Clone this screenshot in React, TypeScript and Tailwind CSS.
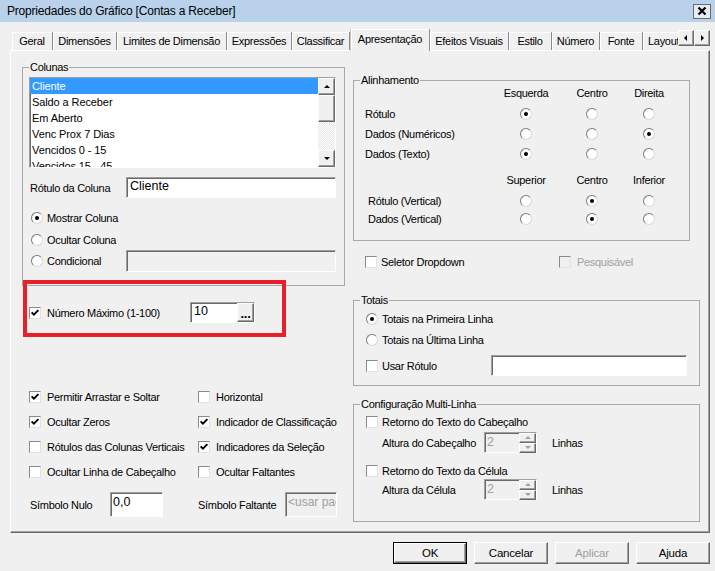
import type { ReactNode } from "react";

/*
 * Caixa de diálogo "Propriedades do Gráfico", aba Apresentação.
 * Controles no estilo clássico do Windows: bordas 3D, campos rebaixados.
 */

const rebaixado =
  "border border-t-[#a0a0a0] border-l-[#a0a0a0] border-r-white border-b-white shadow-[inset_1px_1px_0_#696969]";
const elevado =
  "border border-t-white border-l-white border-r-[#696969] border-b-[#696969] shadow-[inset_-1px_-1px_0_#a0a0a0]";
const fonteCampo = "text-[12.5px] tracking-[0px]";

function Caixa({ marcado = false, desabilitado = false }: { marcado?: boolean; desabilitado?: boolean }) {
  return (
    <span
      className={`relative inline-block size-[12px] shrink-0 border border-t-[#8a8a8a] border-l-[#8a8a8a] border-r-[#e2e2e2] border-b-[#e2e2e2] ${
        desabilitado ? "bg-[#f0f0f0]" : "bg-white"
      }`}
    >
      {marcado ? (
        <svg viewBox="0 0 10 10" className="absolute inset-0 size-full">
          <path d="M1.6 4.4 3.9 6.7 8.4 2.2" fill="none" stroke="#000" strokeWidth="1.9" />
        </svg>
      ) : null}
    </span>
  );
}

function Opcao({ marcado = false }: { marcado?: boolean }) {
  return (
    <span className="inline-flex size-[12px] shrink-0 items-center justify-center rounded-full border border-t-[#7a7a7a] border-l-[#7a7a7a] border-r-[#d8d8d8] border-b-[#d8d8d8] bg-white">
      {marcado ? <span className="size-[4px] rounded-full bg-black" /> : null}
    </span>
  );
}

function Grupo({
  titulo,
  className = "",
  children,
}: {
  titulo: string;
  className?: string;
  children: ReactNode;
}) {
  return (
    <fieldset className={`flex flex-col border border-[#a8a8a8] ${className}`}>
      <legend className="ml-[6px] px-[1px] leading-[13px]">{titulo}</legend>
      {children}
    </fieldset>
  );
}

function Seta({ direcao, cor = "#000" }: { direcao: "cima" | "baixo" | "esq" | "dir"; cor?: string }) {
  const d = {
    cima: "M1 5 4 2 7 5Z",
    baixo: "M1 2 4 5 7 2Z",
    esq: "M5 1 2 4 5 7Z",
    dir: "M3 1 6 4 3 7Z",
  }[direcao];
  return (
    <svg viewBox="0 0 8 8" className="size-[8px]">
      <path d={d} fill={cor} />
    </svg>
  );
}

function Rotador() {
  return (
    <div className={`flex h-[21px] w-[53px] bg-[#f0f0f0] ${rebaixado}`}>
      <span className={`flex-1 pl-[2px] leading-[18px] text-[#a0a0a0] ${fonteCampo}`}>2</span>
      <div className="flex w-[17px] flex-col">
        <span className={`flex flex-1 items-center justify-center bg-[#f0f0f0] ${elevado}`}>
          <Seta direcao="cima" cor="#a0a0a0" />
        </span>
        <span className={`flex flex-1 items-center justify-center bg-[#f0f0f0] ${elevado}`}>
          <Seta direcao="baixo" cor="#a0a0a0" />
        </span>
      </div>
    </div>
  );
}

const abas = [
  { nome: "Geral", w: "w-[41px]" },
  { nome: "Dimensões", w: "w-[64px]" },
  { nome: "Limites de Dimensão", w: "w-[110px]" },
  { nome: "Expressões", w: "w-[65px]" },
  { nome: "Classificar", w: "w-[58px]" },
  { nome: "Apresentação", w: "w-[80px]", ativa: true },
  { nome: "Efeitos Visuais", w: "w-[79px]" },
  { nome: "Estilo", w: "w-[43px]" },
  { nome: "Número", w: "w-[48px]" },
  { nome: "Fonte", w: "w-[43px]" },
  { nome: "Layout", w: "w-[60px] justify-start pl-[5px]" },
];

const colunas = [
  "Cliente",
  "Saldo a Receber",
  "Em Aberto",
  "Venc Prox 7 Dias",
  "Vencidos 0 - 15",
  "Vencidos 15 - 45",
];

const alinhamentoH = [
  { rotulo: "Rótulo", sel: 0 },
  { rotulo: "Dados (Numéricos)", sel: 2 },
  { rotulo: "Dados (Texto)", sel: 0 },
];

const alinhamentoV = [
  { rotulo: "Rótulo (Vertical)", sel: 1 },
  { rotulo: "Dados (Vertical)", sel: 1 },
];

const opcoesGerais: [string, boolean][] = [
  ["Permitir Arrastar e Soltar", true],
  ["Horizontal", false],
  ["Ocultar Zeros", true],
  ["Indicador de Classificação", true],
  ["Rótulos das Colunas Verticais", false],
  ["Indicadores da Seleção", true],
  ["Ocultar Linha de Cabeçalho", false],
  ["Ocultar Faltantes", false],
];

function Celulas({ sel }: { sel: number }) {
  return (
    <>
      <span className="flex w-[64px] justify-center">
        <Opcao marcado={sel === 0} />
      </span>
      <span className="flex w-[68px] justify-center">
        <Opcao marcado={sel === 1} />
      </span>
      <span className="flex w-[46px] justify-center">
        <Opcao marcado={sel === 2} />
      </span>
    </>
  );
}

function Botao({ children, padrao = false, desabilitado = false }: { children: ReactNode; padrao?: boolean; desabilitado?: boolean }) {
  return (
    <div className={`h-[22px] w-[74px] ${padrao ? "border border-black" : ""}`}>
      <div
        className={`flex size-full items-center justify-center bg-[#f0f0f0] text-[11.5px] tracking-[-0.2px] ${elevado} ${
          desabilitado ? "text-[#a0a0a0]" : ""
        }`}
      >
        {children}
      </div>
    </div>
  );
}

export default function App() {
  return (
    <div className="relative h-[571px] w-[715px] overflow-hidden bg-[#f0f0f0] font-['Liberation_Sans',Arial,sans-serif] text-[11px] leading-[14px] tracking-[-0.3px] whitespace-nowrap text-black">
      {/* barra de título */}
      <div className="flex h-[22px] items-center bg-[#b9d1ea] pl-[7px]">
        <span className="text-[12px] tracking-[-0.2px]">Propriedades do Gráfico [Contas a Receber]</span>
        <span className="mr-[4px] ml-auto flex h-[15px] w-[18px] items-center justify-center border border-[#6a6a6a] bg-[#e4ebf3]">
          <svg viewBox="0 0 12 10" className="h-[10px] w-[12px]">
            <path d="M2.5 1.5 9.5 8.5M9.5 1.5 2.5 8.5" stroke="#000" strokeWidth="2.2" />
          </svg>
        </span>
      </div>

      {/* abas */}
      <div className="relative z-10 flex h-[29px] items-end pl-[12px]">
        <div className="flex h-full w-[666px] items-end overflow-hidden">
          {abas.map((a) => (
            <div
              key={a.nome}
              className={`flex shrink-0 items-center justify-center overflow-hidden border-r border-r-[#8c8c8c] bg-[#f0f0f0] shadow-[inset_1px_1px_0_#fff] ${a.w} ${
                a.ativa ? "h-[22px] border-l border-l-[#c8c8c8] pb-[2px]" : "mb-[1px] h-[18px]"
              }`}
            >
              {a.nome}
            </div>
          ))}
        </div>
        <div className="mb-[5px] flex">
          <span className={`flex size-[16px] items-center justify-center bg-[#f0f0f0] ${elevado}`}>
            <Seta direcao="esq" />
          </span>
          <span className={`flex size-[16px] items-center justify-center bg-[#f0f0f0] ${elevado}`}>
            <Seta direcao="dir" />
          </span>
        </div>
      </div>

      {/* painel da aba */}
      <div className="-mt-[1px] ml-[10px] flex h-[483px] w-[700px] border border-t-white border-l-white border-r-[#696969] border-b-[#696969] pt-[10px] pl-[11px] shadow-[inset_-1px_-1px_0_#a0a0a0]">
        {/* coluna esquerda */}
        <div className="flex w-[323px] flex-col">
          <Grupo titulo="Colunas" className="h-[225px] w-[323px]">
            <div className={`mt-[3px] ml-[6px] flex h-[91px] w-[307px] bg-white ${rebaixado}`}>
              <div className="flex-1 overflow-hidden tracking-[-0.1px]">
                {colunas.map((c, i) => (
                  <div
                    key={c}
                    className={`h-[16px] pl-[2px] leading-[16px] ${i === 0 ? "bg-[#3399ff] text-white" : ""}`}
                  >
                    {c}
                  </div>
                ))}
              </div>
              <div className="flex w-[17px] flex-col">
                <span className={`flex h-[17px] items-center justify-center bg-[#f0f0f0] ${elevado}`}>
                  <Seta direcao="cima" />
                </span>
                <span className={`h-[27px] bg-[#f0f0f0] ${elevado}`} />
                <span className="flex-1 bg-[repeating-conic-gradient(#e6e6e6_0_25%,#ffffff_0_50%)] bg-[length:2px_2px]" />
                <span className={`flex h-[17px] items-center justify-center bg-[#f0f0f0] ${elevado}`}>
                  <Seta direcao="baixo" />
                </span>
              </div>
            </div>

            <div className="mt-[9px] ml-[7px] flex h-[21px] items-center">
              <span className="w-[96px]">Rótulo da Coluna</span>
              <span className={`h-[21px] w-[210px] bg-white pl-[3px] leading-[17px] ${fonteCampo} ${rebaixado}`}>
                Cliente
              </span>
            </div>

            <div className="mt-[12px] ml-[8px] flex h-[16px] items-center gap-[4px]">
              <Opcao marcado />
              <span>Mostrar Coluna</span>
            </div>
            <div className="mt-[6px] ml-[8px] flex h-[16px] items-center gap-[4px]">
              <Opcao />
              <span>Ocultar Coluna</span>
            </div>
            <div className="mt-[2px] ml-[8px] flex h-[22px] items-center">
              <span className="flex w-[95px] items-center gap-[4px]">
                <Opcao />
                <span>Condicional</span>
              </span>
              <span className={`h-[22px] w-[210px] bg-[#f0f0f0] ${rebaixado}`} />
            </div>
          </Grupo>

          <div className="mt-[16px] ml-[7px] flex h-[21px] items-center">
            <span className="flex w-[161px] items-center gap-[6px]">
              <Caixa marcado />
              <span>Número Máximo (1-100)</span>
            </span>
            <span className={`flex h-[21px] w-[65px] bg-white ${rebaixado}`}>
              <span className={`flex-1 pl-[3px] leading-[17px] ${fonteCampo}`}>10</span>
              <span className={`flex w-[17px] items-end justify-center bg-[#f0f0f0] pb-[2px] text-[13px] leading-[10px] font-bold ${elevado}`}>
                ...
              </span>
            </span>
          </div>

          <div className="mt-[66px] ml-[7px] grid grid-cols-[169px_1fr] gap-y-[9px]">
            {opcoesGerais.map(([rotulo, marcado]) => (
              <div key={rotulo} className="flex h-[16px] items-center gap-[6px]">
                <Caixa marcado={marcado} />
                <span>{rotulo}</span>
              </div>
            ))}
          </div>

          <div className="mt-[12px] ml-[8px] flex h-[25px] items-center">
            <span className="w-[80px]">Símbolo Nulo</span>
            <span className={`h-[25px] w-[53px] bg-white pl-[2px] leading-[18px] ${fonteCampo} ${rebaixado}`}>0,0</span>
            <span className="ml-[35px] w-[87px]">Símbolo Faltante</span>
            <span
              className={`h-[25px] w-[52px] overflow-hidden bg-[#f0f0f0] pl-[2px] leading-[18px] text-[12px] tracking-[0px] text-[#a0a0a0] ${rebaixado}`}
            >
              &lt;usar padrão&gt;
            </span>
          </div>
        </div>

        {/* coluna direita */}
        <div className="mt-[13px] ml-[8px] flex w-[347px] flex-col">
          <Grupo titulo="Alinhamento" className="h-[167px] w-[337px]">
            <div className="ml-[11px] flex h-[13px] leading-[13px]">
              <span className="w-[129px]" />
              <span className="w-[64px] text-center">Esquerda</span>
              <span className="w-[68px] text-center">Centro</span>
              <span className="w-[46px] text-center">Direita</span>
            </div>
            <div className="mt-[4px]">
              {alinhamentoH.map((l) => (
                <div key={l.rotulo} className="ml-[11px] flex h-[20px] items-center">
                  <span className="w-[129px]">{l.rotulo}</span>
                  <Celulas sel={l.sel} />
                </div>
              ))}
            </div>
            <div className="mt-[9px] ml-[11px] flex h-[14px] leading-[14px]">
              <span className="w-[129px]" />
              <span className="w-[64px] text-center">Superior</span>
              <span className="w-[68px] text-center">Centro</span>
              <span className="w-[46px] text-center">Inferior</span>
            </div>
            <div className="mt-[5px]">
              {alinhamentoV.map((l) => (
                <div key={l.rotulo} className="ml-[14px] flex h-[18px] items-center">
                  <span className="w-[126px]">{l.rotulo}</span>
                  <Celulas sel={l.sel} />
                </div>
              ))}
            </div>
          </Grupo>

          <div className="mt-[13px] ml-[12px] flex h-[16px] items-center">
            <span className="flex w-[194px] items-center gap-[4px]">
              <Caixa />
              <span>Seletor Dropdown</span>
            </span>
            <span className="flex items-center gap-[6px] text-[#a0a0a0]">
              <Caixa desabilitado />
              <span>Pesquisável</span>
            </span>
          </div>

          <Grupo titulo="Totais" className="mt-[24px] h-[92px] w-[347px]">
            <div className="mt-[4px] ml-[12px] flex h-[16px] items-center gap-[4px]">
              <Opcao marcado />
              <span>Totais na Primeira Linha</span>
            </div>
            <div className="mt-[5px] ml-[12px] flex h-[16px] items-center gap-[4px]">
              <Opcao />
              <span>Totais na Última Linha</span>
            </div>
            <div className="mt-[7px] ml-[12px] flex h-[21px] items-center">
              <span className="flex w-[125px] items-center gap-[4px]">
                <Caixa />
                <span>Usar Rótulo</span>
              </span>
              <span className={`h-[21px] w-[196px] bg-white ${rebaixado}`} />
            </div>
          </Grupo>

          <Grupo titulo="Configuração Multi-Linha" className="mt-[12px] h-[124px] w-[347px]">
            <div className="mt-[3px] ml-[12px] flex h-[16px] items-center gap-[4px]">
              <Caixa />
              <span>Retorno do Texto do Cabeçalho</span>
            </div>
            <div className="mt-[2px] ml-[28px] flex h-[21px] items-center">
              <span className="w-[102px]">Altura do Cabeçalho</span>
              <Rotador />
              <span className="ml-[15px]">Linhas</span>
            </div>
            <div className="mt-[10px] ml-[12px] flex h-[16px] items-center gap-[4px]">
              <Caixa />
              <span>Retorno do Texto da Célula</span>
            </div>
            <div className="ml-[28px] flex h-[21px] items-center">
              <span className="w-[102px]">Altura da Célula</span>
              <Rotador />
              <span className="ml-[15px]">Linhas</span>
            </div>
          </Grupo>
        </div>
      </div>

      {/* botões */}
      <div className="mt-[9px] flex justify-end gap-[7px] pr-[5px]">
        <Botao padrao>OK</Botao>
        <Botao>Cancelar</Botao>
        <Botao desabilitado>Aplicar</Botao>
        <Botao>Ajuda</Botao>
      </div>

      {/* destaque vermelho sobre o campo Número Máximo */}
      <div className="pointer-events-none absolute top-[280px] left-[23px] h-[57px] w-[263px] border-[4px] border-[#e8202a]" />
    </div>
  );
}
